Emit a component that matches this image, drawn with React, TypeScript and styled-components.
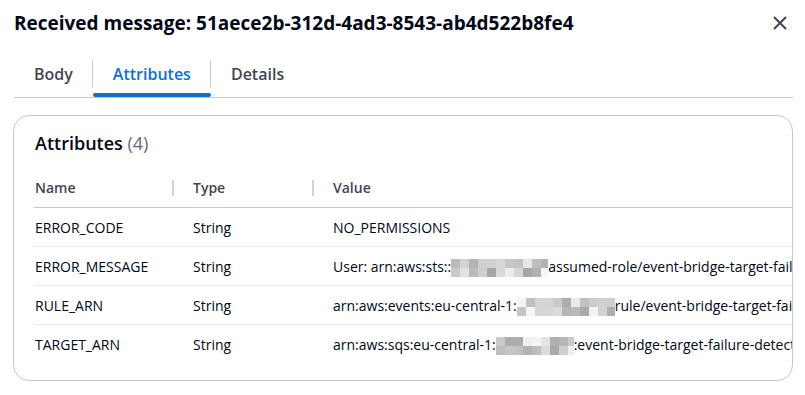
import styled, { createGlobalStyle } from 'styled-components'

const GlobalStyle = createGlobalStyle`
  html, body {
    margin: 0;
    padding: 0;
    background: #ffffff;
  }
  body {
    font-family: "Open Sans", "Noto Sans", sans-serif;
    color: #000716;
    -webkit-font-smoothing: antialiased;
  }
`

const Page = styled.div`
  width: 805px;
  height: 395px;
  box-sizing: border-box;
  padding: 12px 12px 0 13px;
  overflow: hidden;
`

const Header = styled.header`
  display: flex;
  align-items: center;
  justify-content: space-between;
  height: 22px;
  padding: 0 5px 0 1px;
`

const Title = styled.h1`
  margin: 0;
  font-size: 19px;
  line-height: 22px;
  font-weight: 700;
  color: #000716;
  white-space: nowrap;
`

const CloseButton = styled.button`
  display: flex;
  align-items: center;
  justify-content: center;
  width: 16px;
  height: 16px;
  padding: 0;
  border: none;
  background: none;
  color: #424650;
  cursor: pointer;
`

const TabList = styled.div`
  display: flex;
  align-items: stretch;
  height: 45px;
  margin-top: 18px;
  margin-left: 1px;
  border-bottom: 1px solid #c6c6cd;
`

const Tab = styled.div<{ $active?: boolean; $divider?: boolean }>`
  position: relative;
  display: flex;
  align-items: center;
  padding: 0 20px 2px 20px;
  font-size: 16px;
  font-weight: 600;
  color: ${({ $active }) => ($active ? '#0972d3' : '#424650')};
  &::before {
    content: '';
    display: ${({ $divider }) => ($divider ? 'block' : 'none')};
    position: absolute;
    left: -1px;
    top: 8px;
    height: 27px;
    width: 1px;
    background: #c6c6cd;
  }
  &::after {
    content: '';
    display: ${({ $active }) => ($active ? 'block' : 'none')};
    position: absolute;
    left: 0;
    right: 0;
    bottom: 0;
    height: 4px;
    border-radius: 2px;
    background: #0972d3;
  }
`

const Card = styled.section`
  margin-top: 17px;
  height: 266px;
  box-sizing: border-box;
  border: 1px solid #c6c6cd;
  border-radius: 16px;
  padding: 16px 0 16px 20px;
  overflow: hidden;
`

const CardTitle = styled.h2`
  margin: 0 0 0 1px;
  font-size: 18px;
  line-height: 22px;
  font-weight: 600;
`

const Count = styled.span`
  font-weight: 400;
  color: #5f6b7a;
`

const Table = styled.div`
  margin-top: 14px;
  overflow: hidden;
`

const Row = styled.div<{ $head?: boolean; $last?: boolean }>`
  display: grid;
  grid-template-columns: 139px 140px 1fr;
  height: ${({ $head }) => ($head ? '39px' : '38px')};
  border-bottom: 1px solid
    ${({ $head, $last }) => ($head ? '#c6c6cd' : $last ? 'transparent' : '#e9ebed')};
`

const Cell = styled.div<{ $head?: boolean; $first?: boolean }>`
  position: relative;
  display: flex;
  align-items: center;
  padding-left: ${({ $first }) => ($first ? '1px' : '20px')};
  font-size: 14px;
  font-weight: ${({ $head }) => ($head ? 600 : 400)};
  color: ${({ $head }) => ($head ? '#424650' : '#000716')};
  white-space: nowrap;
  &::before {
    content: '';
    display: ${({ $head, $first }) => ($head && !$first ? 'block' : 'none')};
    position: absolute;
    left: -1px;
    top: 12px;
    width: 2px;
    height: 16px;
    background: #d1d5db;
  }
`

const RedactedBox = styled.span<{ $w: number }>`
  display: inline-grid;
  grid-auto-flow: column;
  grid-template-rows: 9px 9px;
  width: ${({ $w }) => $w}px;
  height: 18px;
  margin-top: 4px;
  overflow: hidden;
`

const Pixel = styled.span`
  display: block;
  width: 9px;
  height: 9px;
`

function Redacted({ width, seed }: { width: number; seed: number }) {
  const count = Math.ceil(width / 9) * 2
  const shades = [...Array(count)].map((_, i) => {
    const v = Math.abs(Math.sin((i + 1) * 12.9898 + seed * 78.233)) * 43758.5453
    const f = v - Math.floor(v)
    const g = Math.round(165 + f * 85)
    return `rgb(${g},${g},${g})`
  })
  return (
    <RedactedBox $w={width}>
      {shades.map((c, i) => (
        <Pixel key={i} style={{ background: c }} />
      ))}
    </RedactedBox>
  )
}

const rows = [
  { name: 'ERROR_CODE', value: <>NO_PERMISSIONS</> },
  {
    name: 'ERROR_MESSAGE',
    value: (
      <>
        User: arn:aws:sts::
        <Redacted width={97} seed={1} />
        assumed-role/event-bridge-target-failure-detection-role/invoke
      </>
    ),
  },
  {
    name: 'RULE_ARN',
    value: (
      <>
        arn:aws:events:eu-central-1:
        <Redacted width={98} seed={2} />
        rule/event-bridge-target-failure-detection
      </>
    ),
  },
  {
    name: 'TARGET_ARN',
    value: (
      <>
        arn:aws:sqs:eu-central-1:
        <Redacted width={78} seed={3} />
        :event-bridge-target-failure-detection-queue
      </>
    ),
  },
]

export default function App() {
  return (
    <>
      <GlobalStyle />
      <Page>
        <Header>
          <Title>Received message: 51aece2b-312d-4ad3-8543-ab4d522b8fe4</Title>
          <CloseButton aria-label="Close">
            <svg width="16" height="16" viewBox="0 0 16 16" fill="none">
              <path d="M2 2l12 12M14 2L2 14" stroke="currentColor" strokeWidth="2" />
            </svg>
          </CloseButton>
        </Header>

        <TabList>
          <Tab>Body</Tab>
          <Tab $active $divider>Attributes</Tab>
          <Tab $divider>Details</Tab>
        </TabList>

        <Card>
          <CardTitle>
            Attributes <Count>(4)</Count>
          </CardTitle>
          <Table>
            <Row $head>
              <Cell $head $first>Name</Cell>
              <Cell $head>Type</Cell>
              <Cell $head>Value</Cell>
            </Row>
            {rows.map((r, i) => (
              <Row key={r.name} $last={i === rows.length - 1}>
                <Cell $first>{r.name}</Cell>
                <Cell>String</Cell>
                <Cell>{r.value}</Cell>
              </Row>
            ))}
          </Table>
        </Card>
      </Page>
    </>
  )
}
